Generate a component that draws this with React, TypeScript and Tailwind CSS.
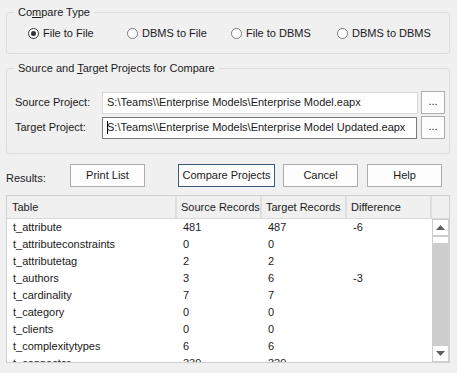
import React from 'react';

const rows = [
  { name: 't_attribute', src: '481', tgt: '487', diff: '-6' },
  { name: 't_attributeconstraints', src: '0', tgt: '0', diff: '' },
  { name: 't_attributetag', src: '2', tgt: '2', diff: '' },
  { name: 't_authors', src: '3', tgt: '6', diff: '-3' },
  { name: 't_cardinality', src: '7', tgt: '7', diff: '' },
  { name: 't_category', src: '0', tgt: '0', diff: '' },
  { name: 't_clients', src: '0', tgt: '0', diff: '' },
  { name: 't_complexitytypes', src: '6', tgt: '6', diff: '' },
  { name: 't_connector', src: '339', tgt: '339', diff: '' },
];

function Radio({ label, checked, width }: { label: string; checked?: boolean; width: string }) {
  return (
    <div className={`flex items-center gap-[4px] ${width}`}>
      <span
        className={`flex h-[11px] w-[11px] items-center justify-center rounded-full border bg-white ${
          checked ? 'border-[#333333]' : 'border-[#7a7a7a]'
        }`}
      >
        {checked && <span className="h-[5px] w-[5px] rounded-full bg-[#333333]" />}
      </span>
      <span>{label}</span>
    </div>
  );
}

function WinButton({ children, primary }: { children: React.ReactNode; primary?: boolean }) {
  return (
    <button
      className={`flex h-[23px] items-center justify-center border bg-[#fdfdfd] whitespace-nowrap ${
        primary ? 'w-[97px] border-[#3b5a7a]' : 'w-[75px] border-[#adadad]'
      }`}
    >
      {children}
    </button>
  );
}

export default function App() {
  return (
    <div
      className="h-[373px] w-[457px] overflow-hidden bg-[#f0f0f0] px-[6px] pt-[4px] text-[11px] text-[#1a1a1a]"
      style={{ fontFamily: '"Liberation Sans", Arial, sans-serif' }}
    >
      <fieldset className="w-[444px] rounded-[3px] border border-[#dcdcdc]">
        <legend className="ml-[7px] px-[4px] leading-[16px]">
          Co<span className="underline">m</span>pare Type
        </legend>
        <div className="mt-[5px] mb-[12px] flex h-[16px] items-center pl-[21px]">
          <Radio label="File to File" checked width="w-[99px]" />
          <Radio label="DBMS to File" width="w-[104px]" />
          <Radio label="File to DBMS" width="w-[106px]" />
          <Radio label="DBMS to DBMS" width="w-[100px]" />
        </div>
      </fieldset>

      <fieldset className="mt-[6px] w-[444px] rounded-[3px] border border-[#dcdcdc]">
        <legend className="ml-[7px] px-[4px] leading-[16px]">
          Source and <span className="underline">T</span>arget Projects for Compare
        </legend>
        <div className="mt-[15px] mb-[14px] flex flex-col gap-[2px] pl-[8px]">
          <div className="flex h-[23px] items-center">
            <span className="w-[87px]">Source Project:</span>
            <div className="flex h-[22px] w-[316px] items-center overflow-hidden whitespace-nowrap border border-[#d9d9d9] bg-white pl-[4px]">
              S:\Teams\\Enterprise Models\Enterprise Model.eapx
            </div>
            <button className="ml-[3px] flex h-[23px] w-[24px] items-center justify-center border border-[#adadad] bg-[#fdfdfd] pb-[2px]">
              ...
            </button>
          </div>
          <div className="flex h-[23px] items-center">
            <span className="w-[87px]">Target Project:</span>
            <div className="flex h-[22px] w-[315px] items-center overflow-hidden whitespace-nowrap border border-[#7a7a7a] bg-white pl-[4px]">
              <span className="-mr-px h-[13px] w-px shrink-0 bg-black" />
              S:\Teams\\Enterprise Models\Enterprise Model Updated.eapx
            </div>
            <button className="ml-[4px] flex h-[23px] w-[24px] items-center justify-center border border-[#adadad] bg-[#fdfdfd] pb-[2px]">
              ...
            </button>
          </div>
        </div>
      </fieldset>

      <div className="mt-[10px] flex h-[23px] items-center">
        <span className="mt-[6px] w-[64px]">Results:</span>
        <WinButton>Print List</WinButton>
        <div className="w-[33px]" />
        <WinButton primary>Compare Projects</WinButton>
        <div className="w-[8px]" />
        <WinButton>Cancel</WinButton>
        <div className="w-[9px]" />
        <WinButton>Help</WinButton>
      </div>

      <div className="mt-[8px] w-[444px] border border-[#d0d0d0] bg-white">
        <div className="flex h-[23px] whitespace-nowrap border-b border-[#d9d9d9] bg-[#f0f0f0]">
          <div className="flex w-[170px] items-center border-r-2 border-[#dedede] pl-[5px]">Table</div>
          <div className="flex w-[85px] items-center border-r-2 border-[#dedede] pl-[4px]">Source Records</div>
          <div className="flex w-[85px] items-center border-r-2 border-[#dedede] pl-[4px]">Target Records</div>
          <div className="flex w-[85px] items-center border-r-2 border-[#dedede] pl-[4px]">Difference</div>
          <div className="w-[17px]" />
        </div>
        <div className="flex h-[143px]">
          <div className="w-[425px] overflow-hidden">
            {rows.map((r) => (
              <div key={r.name} className="flex h-[17px] items-center whitespace-nowrap">
                <div className="w-[170px] pl-[6px]">{r.name}</div>
                <div className="w-[85px] pl-[6px]">{r.src}</div>
                <div className="w-[85px] pl-[6px]">{r.tgt}</div>
                <div className="w-[85px] pl-[6px]">{r.diff}</div>
              </div>
            ))}
          </div>
          <div className="flex w-[17px] flex-col bg-[#cdcdcd]">
            <div className="flex h-[17px] items-center justify-center border border-[#cdcdcd] bg-white">
              <svg width="9" height="5" viewBox="0 0 9 5">
                <path d="M0 5 L4.5 0 L9 5 Z" fill="#606060" />
              </svg>
            </div>
            <div className="h-[8px] border border-[#cdcdcd] bg-white" />
            <div className="flex-1" />
            <div className="flex h-[17px] items-center justify-center border border-[#cdcdcd] bg-white">
              <svg width="9" height="5" viewBox="0 0 9 5">
                <path d="M0 0 L4.5 5 L9 0 Z" fill="#606060" />
              </svg>
            </div>
          </div>
        </div>
      </div>
    </div>
  );
}
